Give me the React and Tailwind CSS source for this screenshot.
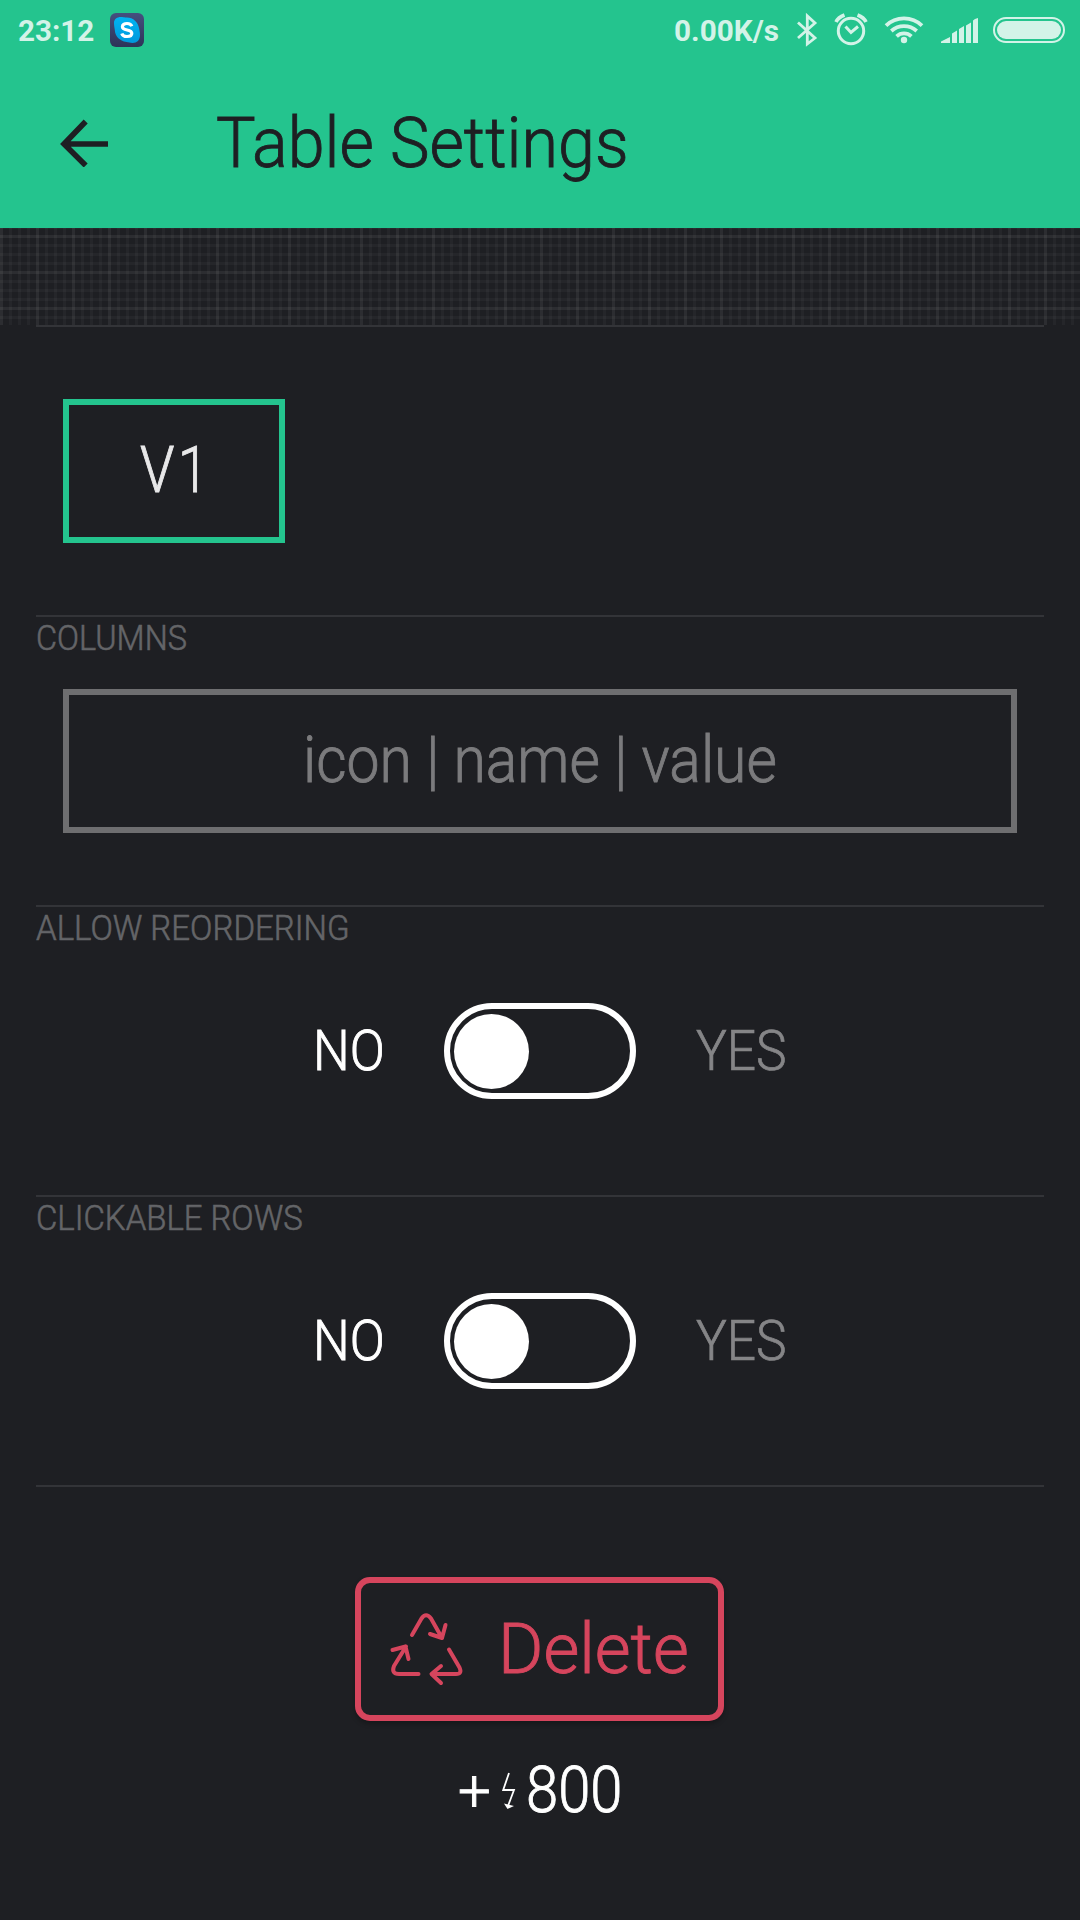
import { useLayoutEffect, useRef, useState } from "react";

// Text scaled horizontally so that it fills exactly the width of its box.
function Fit({ children, className = "" }) {
  const box = useRef(null);
  const text = useRef(null);
  const [scale, setScale] = useState(1);
  useLayoutEffect(() => {
    setScale(box.current.offsetWidth / text.current.offsetWidth);
  }, [children]);
  return (
    <div ref={box} className={`shrink-0 whitespace-nowrap ${className}`}>
      <span ref={text} className="inline-block origin-left" style={{ transform: `scaleX(${scale})` }}>
        {children}
      </span>
    </div>
  );
}

function SkypeIcon() {
  return (
    <svg className="ml-[16px] size-[34px]" viewBox="0 0 34 34">
      <defs>
        <linearGradient id="tile" x1="0" y1="0" x2="0" y2="1">
          <stop offset="0" stopColor="#45507f" />
          <stop offset="1" stopColor="#2d3358" />
        </linearGradient>
        <linearGradient id="cloud" x1="0" y1="0" x2="0" y2="1">
          <stop offset="0" stopColor="#00b4f2" />
          <stop offset="1" stopColor="#0098dc" />
        </linearGradient>
      </defs>
      <rect width="34" height="34" rx="6" fill="url(#tile)" />
      <path
        d="M4 10C4 6 7 4 11 4c2 0 3 .6 5 .4C23 4 28 9 29 15c.3 2 1 4 1 7 0 5-3 8-7.500 8-2.500 0-4-.8-6-1C9.500 28 5 23 4.800 17 4.600 15 4 13 4 10Z"
        fill="url(#cloud)"
      />
      <path
        d="M21.800 13.200c-.6-1.900-2.400-2.700-4.800-2.700-2.700 0-4.600 1.200-4.600 3.200 0 4.600 9.400 2 9.400 6.500 0 2.100-2 3.300-4.800 3.300-2.600 0-4.600-.9-5.200-3"
        fill="none"
        stroke="#fff"
        strokeWidth="3.200"
      />
    </svg>
  );
}

function StatusIcons() {
  return (
    <svg className="h-[60px] w-[284px]" viewBox="796 0 284 60" fill="none" stroke="#d3f3e8">
      <path d="M798 22.500 815 38l-7.700 6V16l7.700 7L798 38" strokeWidth="2.800" />
      <circle cx="851" cy="31" r="12.700" strokeWidth="3" />
      <path d="M845.500 26.500l5.500 6 7-6" strokeWidth="3" />
      <path d="M836 22q2-4.500 8.500-7M866 22q-2-4.500-8.500-7" strokeWidth="3.600" />
      <path d="M886 25.700a26 26 0 0 1 36 0M891.300 31a19 19 0 0 1 25.400 0M896.600 36.300a11 11 0 0 1 14.800 0" strokeWidth="3.800" />
      <circle cx="904" cy="40" r="3.200" fill="#d3f3e8" stroke="none" />
      <path
        d="M941 43v-1.500l9-4.500v6ZM952 43V33.500l5-3V43ZM959 43V29l5-3V43ZM966 43V25.500l5-3V43ZM973 43V20.500q1.500-2 5-2.500v25Z"
        fill="#d3f3e8"
        stroke="none"
      />
      <rect x="994" y="18" width="70" height="24" rx="12" strokeWidth="2" />
      <rect x="997" y="21" width="64" height="18" rx="9" fill="#d3f3e8" stroke="none" />
    </svg>
  );
}

function Toggle({ label }) {
  return (
    <Section label={label}>
      <div className="mt-[44px] flex items-center">
        <Fit className="ml-[277px] w-[72px] text-[56px] leading-[96px] text-white [-webkit-text-stroke:0.9px]">NO</Fit>
        <div className="ml-[59px] flex h-[96px] w-[192px] items-center rounded-full border-6 border-white pl-[4px]">
          <div className="size-[75px] rounded-full bg-white" />
        </div>
        <Fit className="ml-[60px] w-[91px] text-[56px] leading-[96px] text-[#858587] [-webkit-text-stroke:0.7px]">YES</Fit>
      </div>
    </Section>
  );
}

function Section({ label, children }) {
  return (
    <section className="mx-[36px] h-[290px] border-t-2 border-[#333438]">
      {label}
      {children}
    </section>
  );
}

export default function App() {
  return (
    <div className="h-[1920px] w-[1080px] overflow-hidden bg-[#1e1f23] font-['Roboto',sans-serif] font-light">
      <header className="h-[228px] bg-[#24c48e] text-[#1e1f23]">
        <div className="flex h-[60px] items-center font-bold text-[#d3f3e8]">
          <Fit className="ml-[18px] w-[76px] text-[30px] leading-[61px]">23:12</Fit>
          <SkypeIcon />
          <Fit className="ml-auto w-[105px] text-[30px] leading-[61px]">0.00K/s</Fit>
          <div className="w-[17px]" />
          <StatusIcons />
        </div>
        <div className="flex h-[166px] items-center">
          <svg className="ml-[60px] size-[48px]" viewBox="0 0 48 48" fill="none" stroke="#1e1f23" strokeWidth="5.600">
            <path d="M48 25H5M25.700 2.500 4 25l21.700 21.500" />
          </svg>
          <Fit className="ml-[108px] w-[413px] text-[70px] leading-[166px] [-webkit-text-stroke:0.9px]">Table Settings</Fit>
        </div>
      </header>

      <div className="h-[97px] bg-[linear-gradient(90deg,#ffffff08_3px,transparent_3px),linear-gradient(90deg,#ffffff08_3px,transparent_3px),linear-gradient(180deg,#ffffff08_3px,transparent_3px),linear-gradient(180deg,#ffffff08_3px,transparent_3px)] bg-[size:36px_100%,9px_100%,100%_36px,100%_9px] bg-[position:0_0,0_0,0_7px,0_7px]" />

      <Section>
        <div className="mt-[72px] ml-[27px] flex h-[144px] w-[222px] border-6 border-[#24c48e]">
          <div className="ml-[71px] flex gap-[2px] text-[65px] leading-[130px] tracking-[4px] text-[#e8e8e9] [-webkit-text-stroke:0.9px]">
            <Fit className="w-[72px]">V1</Fit>
          </div>
        </div>
      </Section>

      <Section label={<Fit className="w-[151px] text-[35px] leading-[44px] text-[#646568] [-webkit-text-stroke:0.6px]">COLUMNS</Fit>}>
        <div className="mx-[27px] mt-[28px] flex h-[144px] border-6 border-[#6e6e70]">
          <Fit className="ml-[234px] w-[474px] text-[65px] leading-[130px] text-[#7b7b7d] [-webkit-text-stroke:0.9px]">icon | name | value</Fit>
        </div>
      </Section>

      <Toggle label={<Fit className="h-[52px] w-[314px] text-[35px] leading-[44px] text-[#646568] [-webkit-text-stroke:0.6px]">ALLOW REORDERING</Fit>} />
      <Toggle label={<Fit className="h-[52px] w-[267px] text-[35px] leading-[44px] text-[#646568] [-webkit-text-stroke:0.6px]">CLICKABLE ROWS</Fit>} />

      <div className="mx-[36px] border-t-2 border-[#333438]" />
      <button className="mt-[90px] ml-[355px] flex h-[144px] w-[369px] items-center rounded-[15px] border-6 border-[#d6455d] text-[#d6455d] shadow-[0_3px_5px_#00000040]">
        <svg
          className="ml-[29px] size-[74px]"
          viewBox="0 0 74 74"
          fill="none"
          stroke="currentColor"
          strokeWidth="4"
          strokeLinecap="round"
          strokeLinejoin="round"
        >
          <path d="M22 23 31.500 6.500Q36 0 41 6.500L52 26M40 22l12 4 3.500-13" />
          <path d="M59 37.500 69.500 55.500Q72.500 62 66 62H42M51 54l-9.500 8L51 71" />
          <path d="M28.500 62H9Q1 62 4 54L16 34.500M2.500 38l13-3.500L18.500 47" />
        </svg>
        <Fit className="ml-[34px] w-[191px] text-left text-[70px] leading-[130px] [-webkit-text-stroke:0.9px]">Delete</Fit>
      </button>
      <div className="mt-[30px] flex h-[80px] items-center text-white [-webkit-text-stroke:0.9px]">
        <Fit className="ml-[458px] w-[33px] text-[58px] leading-[82px]">+</Fit>
        <svg className="ml-[11px] h-[38px] w-[14px]" viewBox="0 0 14 38" fill="none" stroke="#fff" strokeWidth="1.800">
          <path d="M7 1 1.200 18H12L6 34" />
          <path d="M2 31.500 5.500 37l6.500-3Z" fill="#fff" stroke="none" />
        </svg>
        <Fit className="ml-[10px] w-[97px] text-[64px] leading-[80px]">800</Fit>
      </div>
    </div>
  );
}
